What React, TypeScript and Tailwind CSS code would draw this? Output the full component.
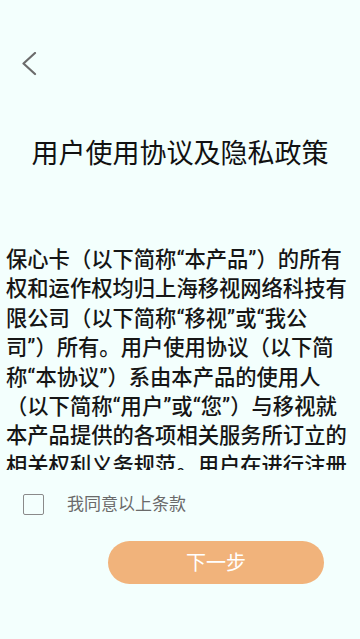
import React, { useState } from "react";

const BODY_LINES = [
  "保心卡（以下简称“本产品”）的所有",
  "权和运作权均归上海移视网络科技有",
  "限公司（以下简称“移视”或“我公",
  "司”）所有。用户使用协议（以下简",
  "称“本协议”）系由本产品的使用人",
  "（以下简称“用户”或“您”）与移视就",
  "本产品提供的各项相关服务所订立的",
  "相关权利义务规范。用户在进行注册",
];

const FONT = "font-['Roboto','Noto_Sans_CJK_SC',sans-serif]";

const AgreementPage = () => {
  const [agreed, setAgreed] = useState(false);

  return (
    <div className={`flex h-[639px] w-[360px] flex-col overflow-hidden bg-[#f3fffd] ${FONT}`}>
      {/* 返回 */}
      <button className="ml-[21px] mt-[52px] h-[24px] w-[16px]" aria-label="back">
        <svg width="16" height="24" viewBox="0 0 16 24" fill="none">
          <polyline
            points="14,1 2.5,11.5 14,22"
            stroke="#6b6b6b"
            strokeWidth="2.2"
            strokeLinecap="round"
            strokeLinejoin="round"
          />
        </svg>
      </button>

      <h1 className="mt-[62px] text-center text-[27px] leading-[32px] font-normal text-[#111]">
        用户使用协议及隐私政策
      </h1>

      <div className="mt-[75px] h-[225px] overflow-hidden pl-[6px] text-[21.3px] leading-[29.4px] font-medium text-[#161616]">
        {BODY_LINES.map((line, i) => (
          <div key={i} className="whitespace-nowrap">
            {line}
          </div>
        ))}
      </div>

      <label className="ml-[23px] mt-[22px] flex items-center gap-[23px]">
        <span
          onClick={() => setAgreed(!agreed)}
          className="flex h-[21px] w-[21px] items-center justify-center rounded-[2px] border-[1.5px] border-[#8a8a8a]"
        >
          {agreed && (
            <svg width="14" height="14" viewBox="0 0 14 14">
              <polyline points="2,7 6,11 12,3" stroke="#8a8a8a" strokeWidth="2" fill="none" />
            </svg>
          )}
        </span>
        <span className="text-[17px] leading-[24px] text-[#6a6a6a]">我同意以上条款</span>
      </label>

      <button className="ml-[108px] mt-[25px] h-[43px] w-[216px] rounded-full bg-[#f1b37b] text-[20px] text-white">
        下一步
      </button>
    </div>
  );
};

export default function App() {
  return <AgreementPage />;
}
